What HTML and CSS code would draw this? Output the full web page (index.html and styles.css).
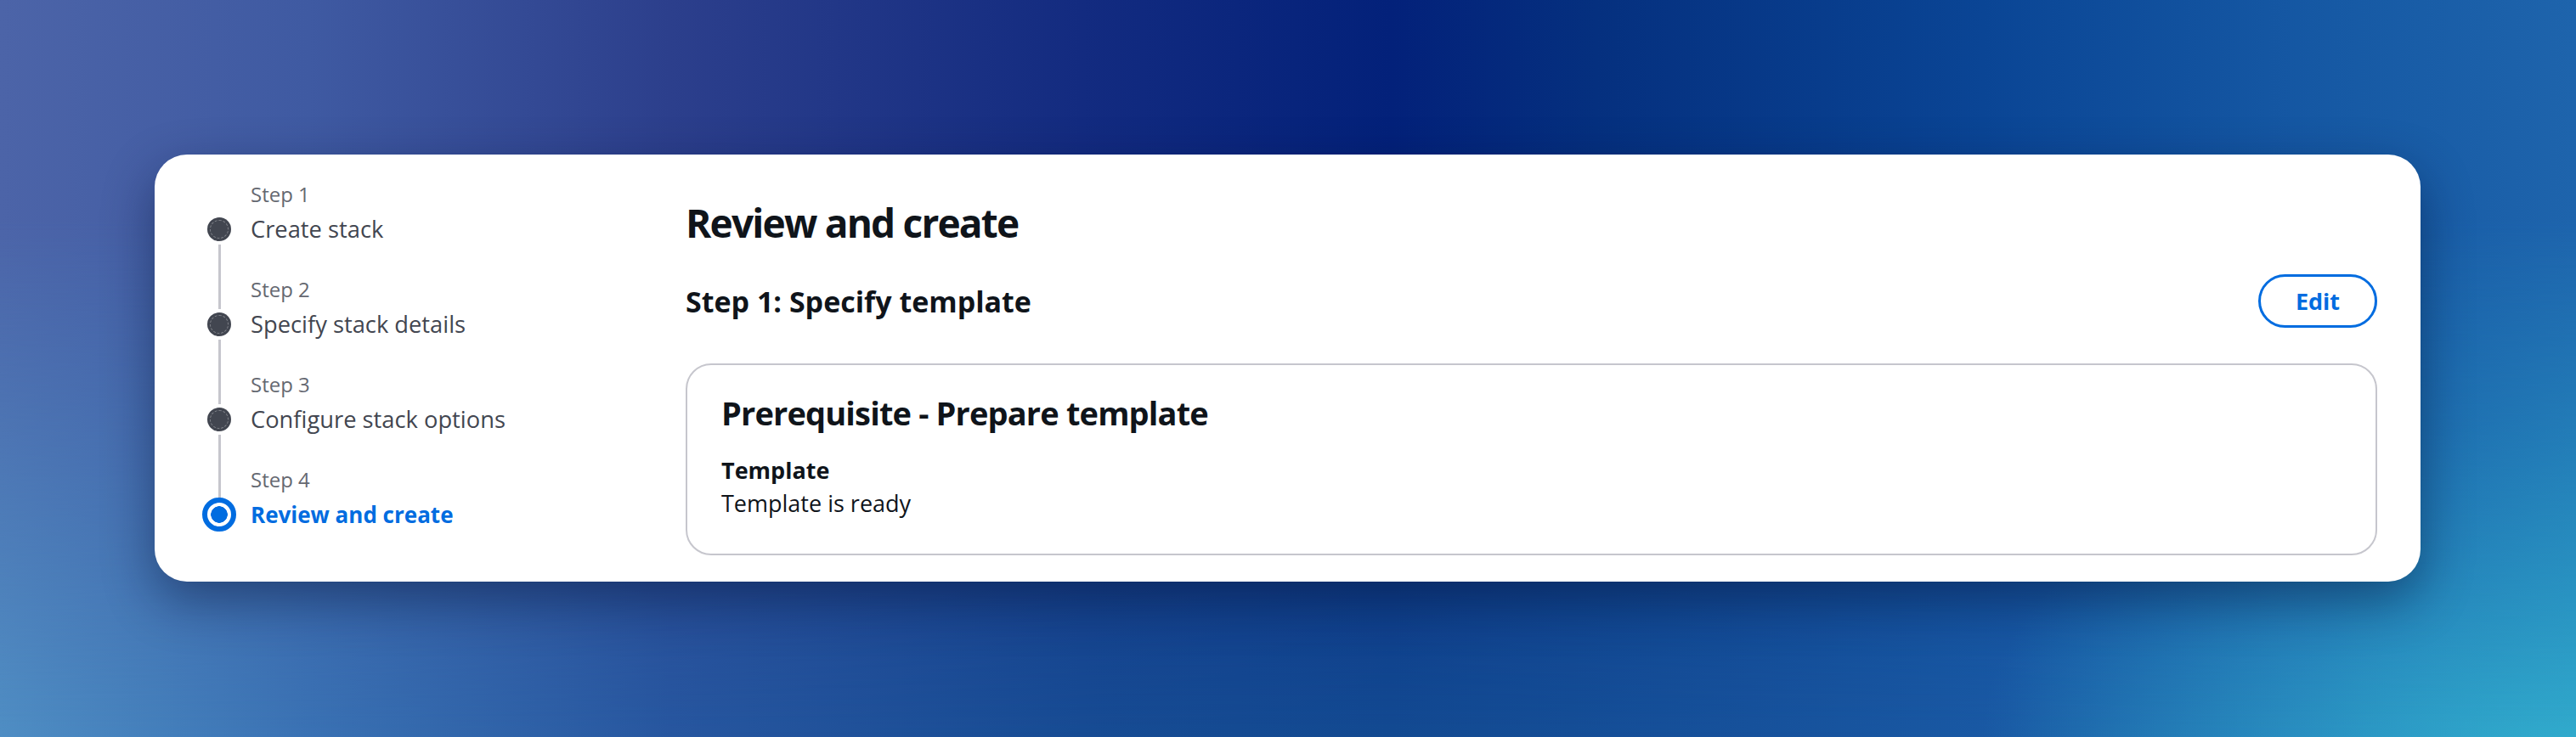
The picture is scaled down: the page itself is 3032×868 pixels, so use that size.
FILE: index.html
```html
<!DOCTYPE html>
<html lang="en">
<head>
<meta charset="utf-8">
<title>Review and create</title>
<link rel="stylesheet" href="styles.css">
</head>
<body>
<div class="stage">
  <div class="card">
    <nav class="steps">
      <div class="step">
        <div class="step-label">Step 1</div>
        <div class="step-main">
          <span class="ind"><span class="dot"></span></span>
          <span class="step-title">Create stack</span>
        </div>
      </div>
      <div class="step">
        <div class="step-label">Step 2</div>
        <div class="step-main">
          <span class="ind"><span class="dot"></span></span>
          <span class="step-title">Specify stack details</span>
        </div>
      </div>
      <div class="step">
        <div class="step-label">Step 3</div>
        <div class="step-main">
          <span class="ind"><span class="dot"></span></span>
          <span class="step-title">Configure stack options</span>
        </div>
      </div>
      <div class="step step-active">
        <div class="step-label">Step 4</div>
        <div class="step-main">
          <span class="ind"><span class="dot dot-active"></span></span>
          <span class="step-title">Review and create</span>
        </div>
      </div>
    </nav>
    <main class="content">
      <h1 class="page-title">Review and create</h1>
      <div class="section-head">
        <h2 class="section-title">Step 1: Specify template</h2>
        <button class="btn-edit" type="button">Edit</button>
      </div>
      <section class="box">
        <h3 class="box-title">Prerequisite - Prepare template</h3>
        <div class="kv-key">Template</div>
        <div class="kv-value">Template is ready</div>
      </section>
    </main>
  </div>
</div>
</body>
</html>
```
FILE: styles.css
```css
* { box-sizing: border-box; }
html, body { margin: 0; padding: 0; }
body {
  position: relative;
  width: 3032px;
  height: 868px;
  overflow: hidden;
  font-family: "Open Sans", "Noto Sans", sans-serif;
  background:
    radial-gradient(ellipse 700px 380px at 100% 100%, rgba(50, 172, 205, 0.85), rgba(50, 172, 205, 0) 100%),
    linear-gradient(to right, #4f8ec4 0%, #3a72b4 12%, #2757a0 26%, #174c94 42%, #134a92 54%, #17529c 68%, #1a5aa5 78%, #2379b7 90%, #2aa0c8 100%);
}
body::before {
  content: "";
  position: absolute;
  inset: 0;
  background: linear-gradient(to right, #4c64a8 0%, #3f5aa2 12%, #2c3f8c 26%, #132b80 42%, #03217a 54%, #05307f 62%, #0a4595 77%, #1456a2 88%, #1e64ac 100%);
  -webkit-mask-image: linear-gradient(to bottom, #000 0%, #000 30%, rgba(0, 0, 0, 0) 100%);
  mask-image: linear-gradient(to bottom, #000 0%, #000 30%, rgba(0, 0, 0, 0) 100%);
}
.stage {
  position: relative;
  z-index: 1;
  padding: 182px 0 0 182px;
}
.card {
  width: 2667px;
  height: 503px;
  background: #fff;
  border-radius: 38px;
  box-shadow: 0 22px 60px rgba(5, 15, 50, 0.45);
  display: grid;
  grid-template-columns: 569px 1fr;
  padding: 28px 51px 31px 56px;
}

/* steps */
.steps {
  display: flex;
  flex-direction: column;
  gap: 30px;
}
.step-label {
  padding-left: 57px;
  font-size: 24px;
  line-height: 38px;
  color: #656871;
}
.step-main {
  display: flex;
  align-items: center;
  height: 44px;
}
.ind {
  width: 40px;
  flex: 0 0 40px;
  display: flex;
  align-items: center;
  justify-content: center;
}
.dot {
  position: relative;
  width: 28px;
  height: 28px;
  border-radius: 50%;
  background: #424650;
}
.dot::before {
  content: "";
  position: absolute;
  inset: 3px;
  border-radius: 50%;
  border: 1px dashed rgba(255, 255, 255, 0.32);
}
.step:not(:last-child) .dot::after {
  content: "";
  position: absolute;
  left: 12.5px;
  top: 32px;
  width: 3px;
  height: 76px;
  background: #c6c6cd;
}
.dot-active {
  width: 40px;
  height: 40px;
  border: 6px solid #006ce0;
  background: radial-gradient(circle, #006ce0 0 9.5px, #fff 10px);
}
.dot-active::before { display: none; }
.step-title {
  margin-left: 17px;
  font-size: 27.3px;
  line-height: 44px;
  color: #424650;
  white-space: nowrap;
}
.step-active .step-title {
  font-size: 26px;
  font-weight: 700;
  color: #006ce0;
}

/* content */
.content {
  display: flex;
  flex-direction: column;
  min-width: 0;
}
.page-title {
  margin: 24px 0 0;
  font-size: 46px;
  line-height: 56px;
  font-weight: 700;
  letter-spacing: -1.8px;
  color: #0f141a;
}
.section-head {
  margin-top: 33px;
  height: 63px;
  display: flex;
  align-items: center;
  justify-content: space-between;
}
.section-title {
  margin: 0;
  font-size: 34px;
  line-height: 44px;
  font-weight: 700;
  color: #0f141a;
}
.btn-edit {
  width: 140px;
  height: 63px;
  border: 3px solid #006ce0;
  border-radius: 32px;
  background: #fff;
  color: #006ce0;
  font-family: "Open Sans", "Noto Sans", sans-serif;
  font-size: 27px;
  font-weight: 700;
  line-height: 1;
  padding: 0;
}
.box {
  margin-top: 42px;
  height: 226px;
  border: 2px solid #c6c6cd;
  border-radius: 30px;
  padding: 32px 40px 0 40px;
}
.box-title {
  margin: 0;
  font-size: 38px;
  line-height: 48px;
  font-weight: 700;
  letter-spacing: -0.85px;
  color: #0f141a;
}
.kv-key {
  margin-top: 25px;
  font-size: 27px;
  line-height: 38px;
  font-weight: 700;
  color: #0f141a;
}
.kv-value {
  font-size: 27px;
  line-height: 40px;
  color: #0f141a;
}
```
